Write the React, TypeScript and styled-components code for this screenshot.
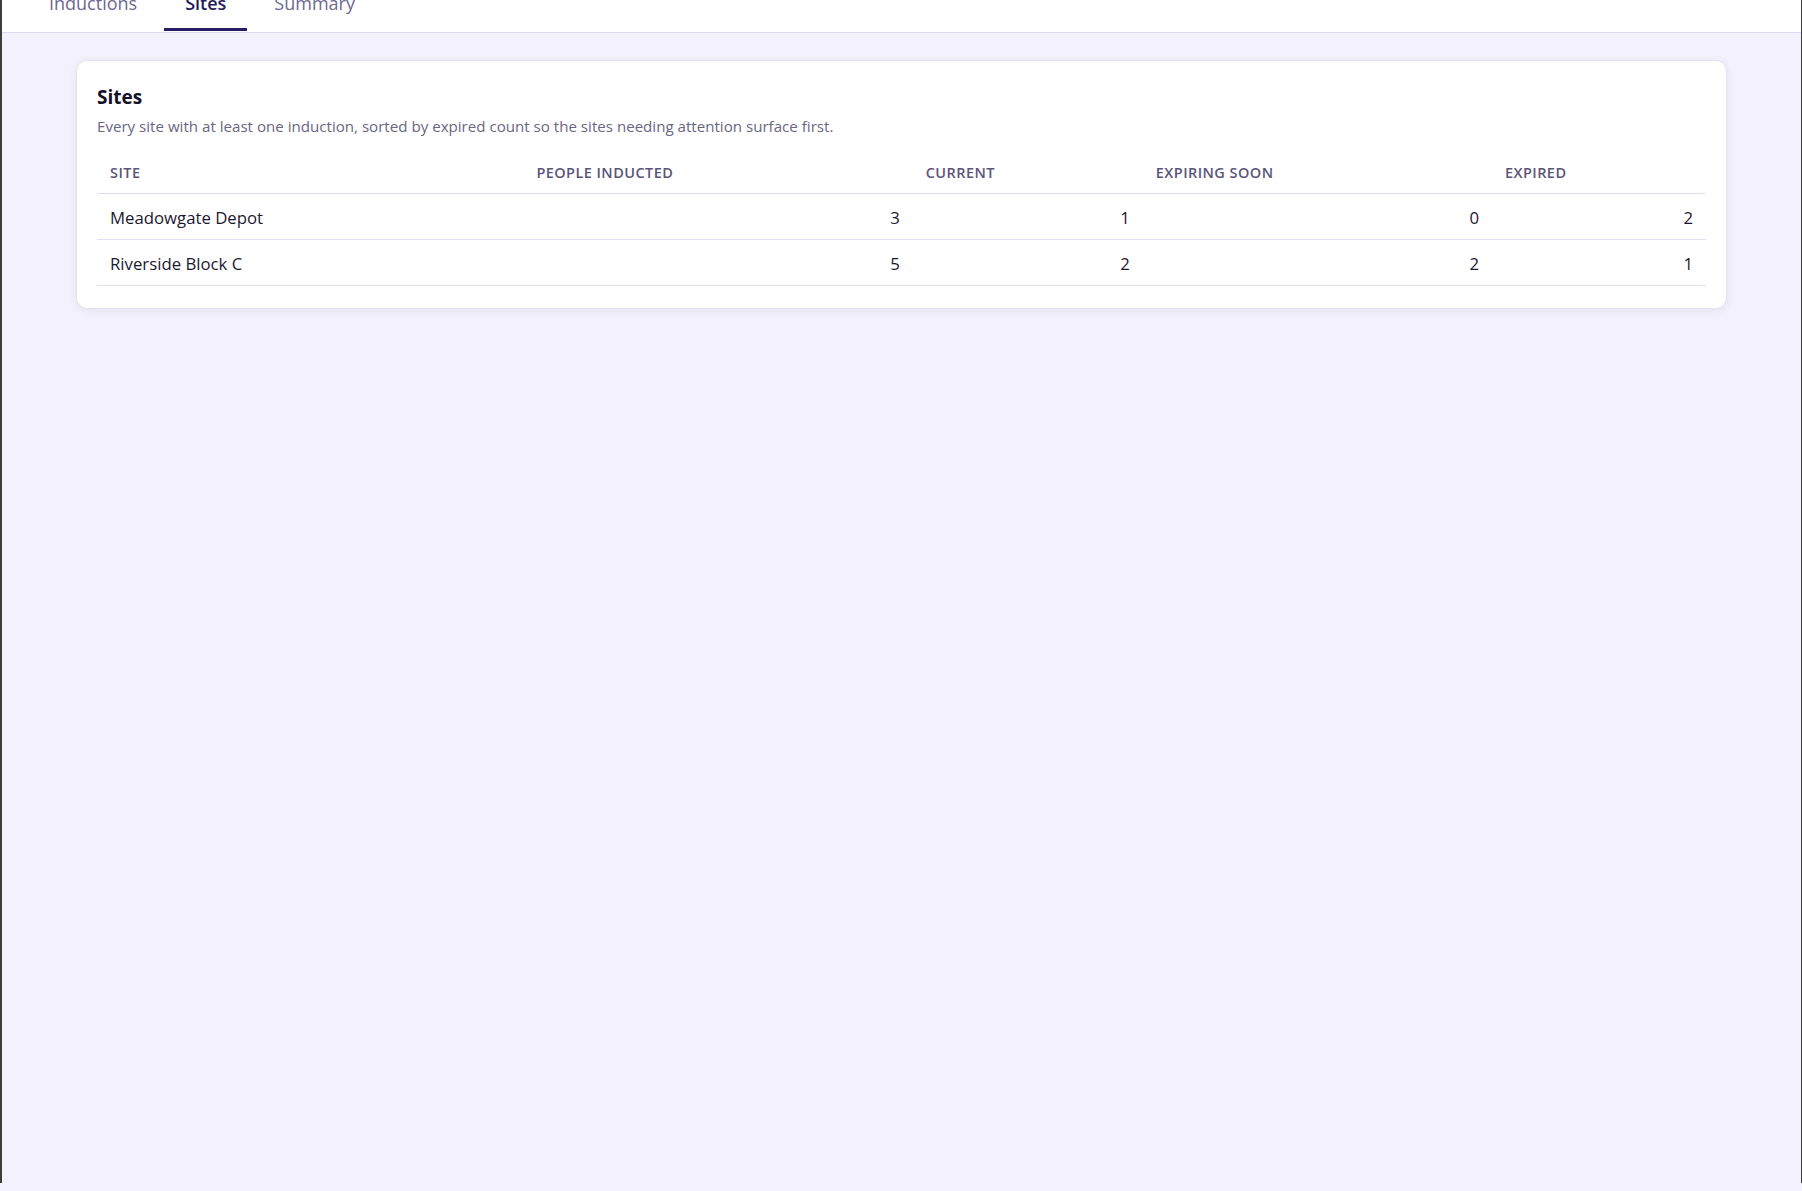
import React from 'react';
import styled, { createGlobalStyle } from 'styled-components';

// Data for each site row
interface SiteRow {
    id: number;
    name: string;
    inducted: number;
    current: number;
    expiringSoon: number;
    expired: number;
}

const sites: SiteRow[] = [
    { id: 1, name: 'Meadowgate Depot', inducted: 3, current: 1, expiringSoon: 0, expired: 2 },
    { id: 2, name: 'Riverside Block C', inducted: 5, current: 2, expiringSoon: 2, expired: 1 },
];

const tabs = ['Inductions', 'Sites', 'Summary'];

const columns: { label: string; width: string; numeric: boolean }[] = [
    { label: 'Site', width: '26.5%', numeric: false },
    { label: 'People inducted', width: '24.2%', numeric: true },
    { label: 'Current', width: '14.3%', numeric: true },
    { label: 'Expiring soon', width: '21.7%', numeric: true },
    { label: 'Expired', width: '13.3%', numeric: true },
];

const GlobalStyle = createGlobalStyle`
  html, body {
    margin: 0;
    padding: 0;
    background: #f3f1fb;
    font-family: 'Open Sans', 'Noto Sans', sans-serif;
    overflow: hidden;
  }
  * { box-sizing: border-box; }
`;

// Window frame, the dark edges seen at both sides
const Frame = styled.div`
  min-height: 100vh;
  border-left: 2px solid #3d3d3d;
  border-right: 1px solid #3d3d3d;
  background: #f3f1fb;
`;

const TabBar = styled.nav`
  display: flex;
  gap: 6px;
  margin-top: -8px;
  padding-left: 26px;
  background: #ffffff;
  border-bottom: 1px solid #dcd8ee;
`;

const Tab = styled.div<{ $active: boolean }>`
  padding: 0 21px 14px;
  font-size: 18px;
  line-height: 22px;
  font-weight: ${(p) => (p.$active ? 600 : 500)};
  color: ${(p) => (p.$active ? '#231b5a' : '#6d6892')};
  border-bottom: 3px solid ${(p) => (p.$active ? '#271d66' : 'transparent')};
  margin-bottom: 1px;
  cursor: pointer;
`;

const Content = styled.main`
  padding: 27px 74px;
`;

const Card = styled.section`
  background: #ffffff;
  border: 1px solid #e4e1f2;
  border-radius: 11px;
  box-shadow: 0 2px 8px rgba(70, 50, 150, 0.07);
  padding: 24px 20px 22px;
`;

const Title = styled.h2`
  margin: 0;
  font-size: 19px;
  line-height: 24px;
  font-weight: 700;
  color: #13102a;
`;

const Subtitle = styled.p`
  margin: 7px 0 0;
  font-size: 15.12px;
  line-height: 21px;
  color: #6a6682;
`;

const Table = styled.table`
  width: 100%;
  margin-top: 14px;
  border-collapse: collapse;
  table-layout: fixed;
`;

const HeadCell = styled.th`
  padding: 12px 13px 10px;
  text-align: left;
  font-size: 14.5px;
  line-height: 20px;
  font-weight: 600;
  letter-spacing: 0.03em;
  text-transform: uppercase;
  color: #5b5579;
  border-bottom: 1px solid #e2def3;
`;

const Row = styled.tr`
  border-bottom: 1px solid #e2def3;
`;

const Cell = styled.td<{ $numeric: boolean }>`
  padding: 12px 13px 10px;
  font-size: 16.75px;
  line-height: 23px;
  color: #1c1831;
  text-align: ${(p) => (p.$numeric ? 'right' : 'left')};
`;

const App: React.FC = () => {
    return (
        <>
            <GlobalStyle />
            <Frame>
                <TabBar>
                    {tabs.map((t) => (
                        <Tab key={t} $active={t === 'Sites'}>
                            {t}
                        </Tab>
                    ))}
                </TabBar>
                <Content>
                    <Card>
                        <Title>Sites</Title>
                        <Subtitle>
                            Every site with at least one induction, sorted by expired count so the sites needing
                            attention surface first.
                        </Subtitle>
                        <Table>
                            <colgroup>
                                {columns.map((c) => (
                                    <col key={c.label} style={{ width: c.width }} />
                                ))}
                            </colgroup>
                            <thead>
                                <tr>
                                    {columns.map((c) => (
                                        <HeadCell key={c.label}>{c.label}</HeadCell>
                                    ))}
                                </tr>
                            </thead>
                            <tbody>
                                {sites.map((s) => (
                                    <Row key={s.id}>
                                        <Cell $numeric={false}>{s.name}</Cell>
                                        <Cell $numeric>{s.inducted}</Cell>
                                        <Cell $numeric>{s.current}</Cell>
                                        <Cell $numeric>{s.expiringSoon}</Cell>
                                        <Cell $numeric>{s.expired}</Cell>
                                    </Row>
                                ))}
                            </tbody>
                        </Table>
                    </Card>
                </Content>
            </Frame>
        </>
    );
};

export default App;
